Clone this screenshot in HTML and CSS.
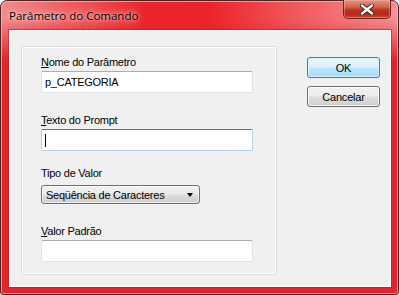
FILE: index.html
```html
<!DOCTYPE html>
<html lang="pt">
  <head>
    <meta charset="UTF-8" />
    <title>Parâmetro do Comando</title>
    <link rel="stylesheet" href="styles.css">
  </head>
  <body>
    <div class="window">
      <div class="title-bar">
        <span class="title">Parâmetro do Comando</span>
        <div class="close-button">
          <svg width="14" height="11" viewBox="0 0 14 11">
            <path d="M2 1.5 L12 9.5 M12 1.5 L2 9.5" stroke="#4a1a14" stroke-width="4.2" stroke-linecap="round" />
            <path d="M2 1.5 L12 9.5 M12 1.5 L2 9.5" stroke="#ffffff" stroke-width="2.4" stroke-linecap="round" />
          </svg>
        </div>
      </div>

      <div class="client">
        <div class="group">
          <label class="field-label"><u>N</u>ome do Parâmetro</label>
          <div class="textbox">p_CATEGORIA</div>

          <label class="field-label spaced"><u>T</u>exto do Prompt</label>
          <div class="textbox focused"><span class="caret"></span></div>

          <label class="field-label after-box">Tipo de Valor</label>
          <div class="combo">
            <span>Seqüência de Caracteres</span>
            <span class="arrow"></span>
          </div>

          <label class="field-label spaced"><u>V</u>alor Padrão</label>
          <div class="textbox"></div>
        </div>

        <div class="buttons">
          <button class="default">OK</button>
          <button>Cancelar</button>
        </div>
      </div>
    </div>
  </body>
</html>
```

FILE: styles.css
```css
* {
  margin: 0;
  padding: 0;
  box-sizing: border-box;
}

body {
  width: 399px;
  height: 295px;
  background-color: #ffffff;
  font-family: "Liberation Sans", Arial, sans-serif;
  font-size: 11px;
  letter-spacing: -0.25px;
  color: #000;
}

.window {
  width: 399px;
  height: 295px;
  display: flex;
  flex-direction: column;
  padding: 0 7px 7px 8px;
  border: 1px solid #4b2324;
  border-radius: 7px 7px 3px 3px;
  box-shadow: inset 0 0 0 1px rgba(255, 190, 190, 0.7);
  background:
    linear-gradient(to bottom, rgba(230, 30, 38, 0) 18px, #e6222a 60px),
    linear-gradient(90deg, #f38a8c 0%, #f05a5e 18%, #ec242b 36%, #ec2229 52%, #f0585c 74%, #f49294 100%);
}

.title-bar {
  height: 29px;
  display: flex;
  justify-content: space-between;
  align-items: flex-start;
}

.title {
  font-family: "Open Sans", "Liberation Sans", sans-serif;
  font-size: 11.5px;
  letter-spacing: 0;
  line-height: 29px;
  color: #000;
  text-shadow: 0 0 8px rgba(255, 255, 255, 0.9), 0 0 3px rgba(255, 255, 255, 0.8);
}

.close-button {
  width: 48px;
  height: 19px;
  margin-top: -1px;
  display: flex;
  align-items: center;
  justify-content: center;
  border: 1px solid #6e2420;
  border-top: none;
  border-radius: 0 0 5px 5px;
  box-shadow: inset 0 0 0 1px rgba(255, 190, 180, 0.4);
  background: linear-gradient(to bottom, #e29484 0%, #d0634c 40%, #bd3220 55%, #b82a18 80%, #d04a30 100%);
}

.client {
  flex: 1;
  display: flex;
  align-items: flex-start;
  padding: 15px 0 0 11px;
  background-color: #f0f0f0;
  border: 1px solid #ffffff;
  box-shadow: 0 0 0 1px rgba(150, 40, 40, 0.55);
}

.group {
  width: 256px;
  height: 229px;
  display: flex;
  flex-direction: column;
  align-items: flex-start;
  padding: 8px 0 0 19px;
  border: 1px solid #d5dfe5;
  border-radius: 3px;
  box-shadow: inset 0 0 0 1px #ffffff;
}

.field-label {
  display: block;
  line-height: 14px;
  margin-bottom: 2px;
}

.field-label.spaced {
  margin-top: 20px;
}

.field-label.after-box {
  margin-top: 15px;
  margin-bottom: 5px;
}

.textbox {
  width: 212px;
  height: 22px;
  padding: 0 3px;
  line-height: 20px;
  background-color: #ffffff;
  border: 1px solid #e2e3ea;
  border-top-color: #abadb3;
  border-radius: 2px;
  display: flex;
  align-items: center;
}

.textbox.focused {
  border-color: #b5cfe7;
  border-top-color: #3d7bad;
}

.caret {
  width: 1px;
  height: 13px;
  background-color: #000;
}

.combo {
  width: 159px;
  height: 19px;
  display: flex;
  align-items: center;
  justify-content: space-between;
  padding: 0 6px 0 4px;
  border: 1px solid #707070;
  border-radius: 3px;
  background: linear-gradient(to bottom, #f2f2f2 0%, #ebebeb 48%, #dddddd 52%, #cfcfcf 100%);
  box-shadow: inset 0 0 0 1px rgba(255, 255, 255, 0.6);
}

.arrow {
  width: 0;
  height: 0;
  border-left: 3.5px solid transparent;
  border-right: 3.5px solid transparent;
  border-top: 4px solid #000;
}

.buttons {
  display: flex;
  flex-direction: column;
  gap: 8px;
  margin: 11px 0 0 30px;
}

button {
  width: 73px;
  height: 21px;
  font-family: "Liberation Sans", Arial, sans-serif;
  font-size: 11px;
  letter-spacing: -0.2px;
  color: #000;
  border: 1px solid #707070;
  border-radius: 3px;
  background: linear-gradient(to bottom, #f2f2f2 0%, #ebebeb 48%, #dddddd 52%, #cfcfcf 100%);
  box-shadow: inset 0 0 0 1px rgba(255, 255, 255, 0.7);
}

button.default {
  border-color: #3c7fb1;
  background: linear-gradient(to bottom, #eaf6fd 0%, #d9f0fc 48%, #bee6fd 52%, #a7d9f5 100%);
  box-shadow: inset 0 0 0 1px rgba(220, 245, 255, 0.9);
}
```
